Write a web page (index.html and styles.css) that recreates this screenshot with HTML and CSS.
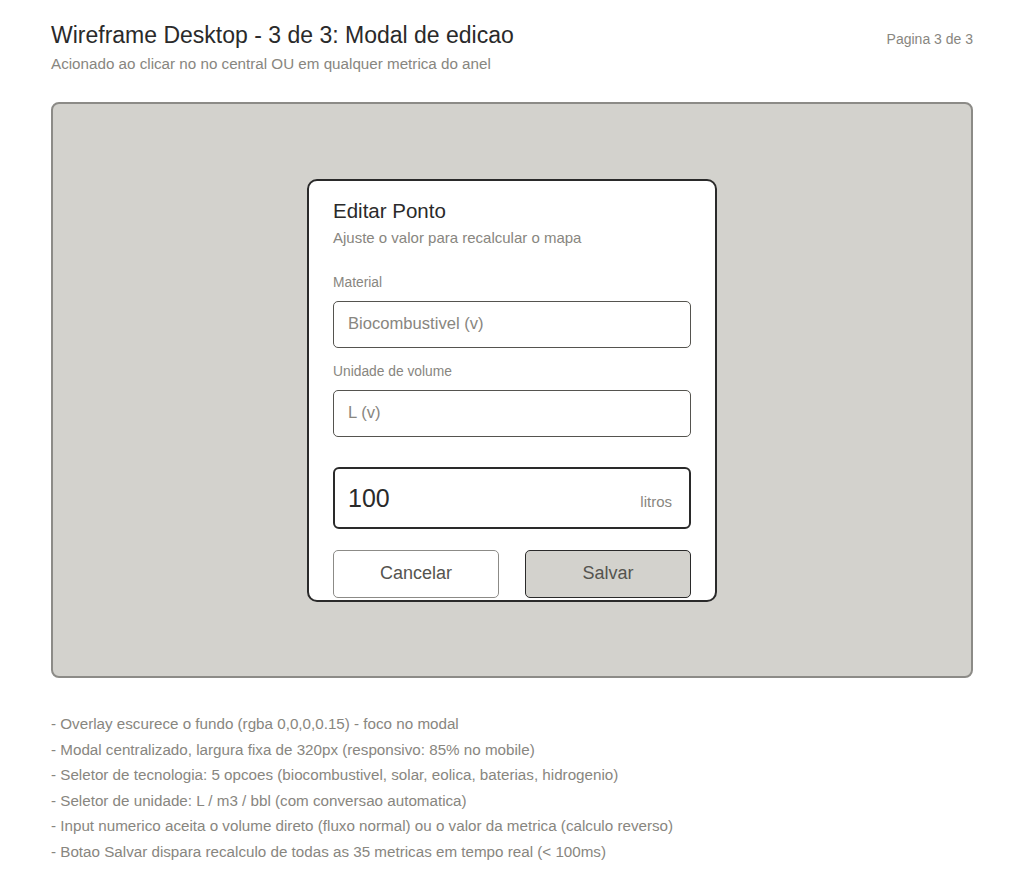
FILE: index.html
```html
<!DOCTYPE html>
<html lang="pt">
<head>
<meta charset="utf-8">
<title>Wireframe Desktop - 3 de 3</title>
<link rel="stylesheet" href="styles.css">
</head>
<body>
<header class="page-header">
  <div class="titles">
    <h1 class="page-title">Wireframe Desktop - 3 de 3: Modal de edicao</h1>
    <p class="page-sub">Acionado ao clicar no no central OU em qualquer metrica do anel</p>
  </div>
  <div class="page-num">Pagina 3 de 3</div>
</header>

<section class="canvas">
  <div class="modal">
    <h2 class="modal-title">Editar Ponto</h2>
    <p class="modal-sub">Ajuste o valor para recalcular o mapa</p>

    <div class="field">
      <div class="field-label">Material</div>
      <div class="select">Biocombustivel (v)</div>
    </div>

    <div class="field field-second">
      <div class="field-label">Unidade de volume</div>
      <div class="select">L (v)</div>
    </div>

    <div class="number-box">
      <span class="number-value">100</span>
      <span class="number-unit">litros</span>
    </div>

    <div class="actions">
      <div class="btn btn-cancel">Cancelar</div>
      <div class="btn btn-save">Salvar</div>
    </div>
  </div>
</section>

<ul class="notes">
  <li>- Overlay escurece o fundo (rgba 0,0,0,0.15) - foco no modal</li>
  <li>- Modal centralizado, largura fixa de 320px (responsivo: 85% no mobile)</li>
  <li>- Seletor de tecnologia: 5 opcoes (biocombustivel, solar, eolica, baterias, hidrogenio)</li>
  <li>- Seletor de unidade: L / m3 / bbl (com conversao automatica)</li>
  <li>- Input numerico aceita o volume direto (fluxo normal) ou o valor da metrica (calculo reverso)</li>
  <li>- Botao Salvar dispara recalculo de todas as 35 metricas em tempo real (&lt; 100ms)</li>
</ul>
</body>
</html>
```

FILE: styles.css
```css
* { box-sizing: border-box; }

html, body {
  margin: 0;
  background: #ffffff;
}

body {
  font-family: "Liberation Sans", Arial, sans-serif;
  padding: 20px 51px 0 51px;
  color: #2a2a2a;
}

.page-header {
  display: flex;
  justify-content: space-between;
  align-items: flex-start;
}

.page-title {
  margin: 0;
  font-size: 23px;
  font-weight: normal;
  line-height: 30px;
  color: #2a2a2a;
}

.page-sub {
  margin: 4px 0 0 0;
  font-size: 15.2px;
  line-height: 20px;
  color: #888680;
}

.page-num {
  font-size: 14px;
  line-height: 18px;
  margin-top: 10px;
  color: #888680;
}

.canvas {
  margin-top: 28px;
  height: 576px;
  border: 2px solid #8c8b87;
  border-radius: 8px;
  background: #d3d2cd;
  display: flex;
  align-items: center;
  justify-content: center;
}

.modal {
  width: 410px;
  height: 423px;
  background: #ffffff;
  border: 2px solid #2a2a2a;
  border-radius: 10px;
  padding: 18px 24px 0 24px;
  overflow: hidden;
}

.modal-title {
  margin: 0;
  font-size: 20.5px;
  font-weight: normal;
  line-height: 24px;
  color: #2a2a2a;
}

.modal-sub {
  margin: 6px 0 0 0;
  font-size: 15px;
  line-height: 18px;
  color: #888680;
}

.field {
  margin-top: 27px;
}

.field-second {
  margin-top: 15px;
}

.field-label {
  font-size: 13.8px;
  line-height: 18px;
  color: #888680;
  margin-bottom: 9px;
}

.select {
  height: 47px;
  border: 1px solid #55544f;
  border-radius: 5px;
  padding: 0 14px;
  display: flex;
  align-items: center;
  font-size: 16.6px;
  color: #888680;
}

.number-box {
  margin-top: 30px;
  height: 62px;
  border: 2px solid #2a2a2a;
  border-radius: 6px;
  padding: 15px 17px 0 13px;
  display: flex;
  align-items: baseline;
  justify-content: space-between;
}

.number-value {
  font-size: 25px;
  line-height: 28px;
  color: #2a2a2a;
}

.number-unit {
  font-size: 15px;
  color: #888680;
}

.actions {
  margin-top: 21px;
  display: flex;
  gap: 26px;
}

.btn {
  flex: 1;
  height: 48px;
  border-radius: 5px;
  display: flex;
  align-items: center;
  justify-content: center;
  font-size: 18px;
  color: #55544f;
}

.btn-cancel {
  background: #ffffff;
  border: 1px solid #8c8b87;
}

.btn-save {
  background: #d3d2cd;
  border: 1px solid #2a2a2a;
}

.notes {
  list-style: none;
  margin: 33px 0 0 0;
  padding: 0;
  font-size: 15.2px;
  line-height: 25.6px;
  color: #888680;
}
```
